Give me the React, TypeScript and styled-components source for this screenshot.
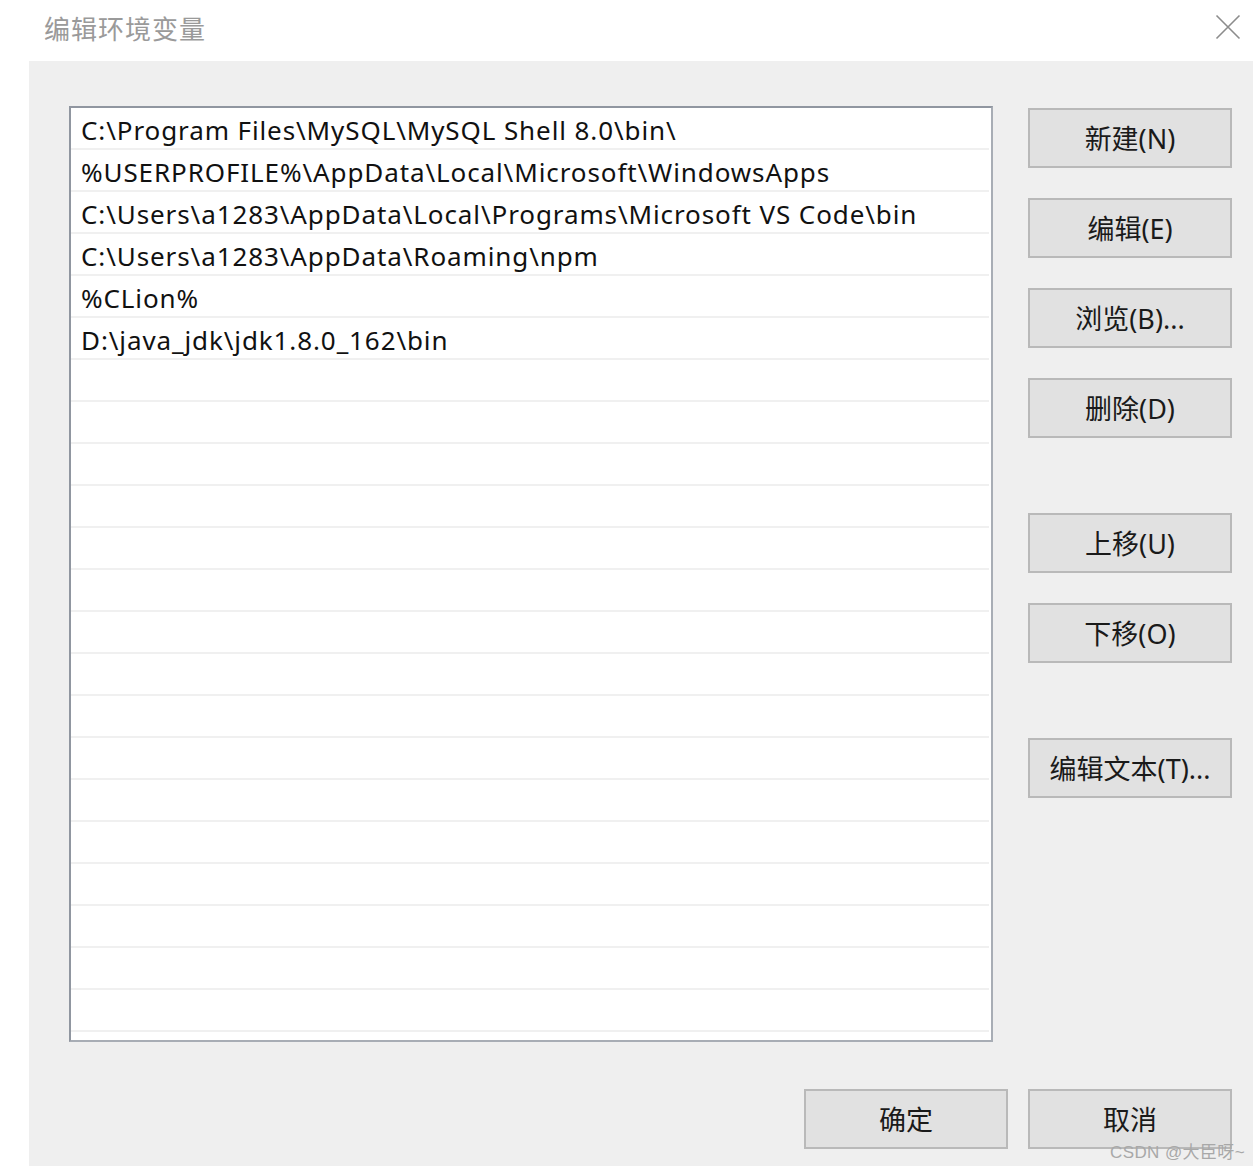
import React from "react";
import styled, { createGlobalStyle } from "styled-components";

const Global = createGlobalStyle`
  html, body { margin: 0; padding: 0; background: #ffffff; }
  body { font-family: "Noto Sans", "Noto Sans CJK SC", sans-serif; }
  * { box-sizing: border-box; }
`;

const Window = styled.div`
  width: 1259px;
  height: 1170px;
  position: relative;
  background: #ffffff;
`;

const TitleBar = styled.div`
  height: 61px;
  display: flex;
  align-items: center;
  justify-content: space-between;
  padding: 0 18px 7px 44px;
`;

const Title = styled.div`
  font-family: "Noto Sans CJK SC", sans-serif;
  font-size: 26px;
  color: #9a9a9a;
  letter-spacing: 1px;
`;

const CloseIcon = styled.svg`
  width: 26px;
  height: 26px;
  display: block;
`;

const Panel = styled.div`
  margin-left: 29px;
  width: 1224px;
  height: 1105px;
  background: #efefef;
  padding: 45px 21px 17px 40px;
  display: flex;
  flex-direction: column;
`;

const Main = styled.div`
  display: flex;
  gap: 35px;
`;

const List = styled.div`
  width: 924px;
  height: 936px;
  background: #ffffff;
  border: 2px solid #9096a0;
  border-right-color: #a8adb5;
  border-bottom-color: #a8adb5;
  display: flex;
  flex-direction: column;
`;

const Row = styled.div`
  height: 42px;
  flex: none;
  border-bottom: 2px solid #f0f0f0;
  margin-right: 2px;
  padding: 3px 0 0 10px;
  display: flex;
  align-items: center;
  font-family: "Noto Sans", "Noto Sans CJK SC", sans-serif;
  font-size: 26px;
  letter-spacing: 0.9px;
  color: #111111;
  white-space: nowrap;
  overflow: hidden;
`;

const ButtonColumn = styled.div`
  padding-top: 2px;
  display: flex;
  flex-direction: column;
  gap: 75px;
`;

const ButtonGroup = styled.div`
  display: flex;
  flex-direction: column;
  gap: 30px;
`;

const Button = styled.button`
  width: 204px;
  height: 60px;
  background: #e1e1e1;
  border: 2px solid #b9b9b9;
  border-radius: 0;
  padding: 0 0 2px 0;
  font-family: "Noto Sans", "Noto Sans CJK SC", sans-serif;
  font-size: 27px;
  color: #1a1a1a;
  display: flex;
  align-items: center;
  justify-content: center;
`;

const Footer = styled.div`
  margin-top: auto;
  display: flex;
  justify-content: flex-end;
  gap: 20px;
`;

const Watermark = styled.div`
  position: absolute;
  left: 1110px;
  top: 1138px;
  font-family: "Liberation Sans", "Noto Sans CJK SC", sans-serif;
  font-size: 17px;
  letter-spacing: 0.4px;
  color: #a8a8a8;
  white-space: nowrap;
`;

const paths = [
  "C:\\Program Files\\MySQL\\MySQL Shell 8.0\\bin\\",
  "%USERPROFILE%\\AppData\\Local\\Microsoft\\WindowsApps",
  "C:\\Users\\a1283\\AppData\\Local\\Programs\\Microsoft VS Code\\bin",
  "C:\\Users\\a1283\\AppData\\Roaming\\npm",
  "%CLion%",
  "D:\\java_jdk\\jdk1.8.0_162\\bin",
];

const rows = Array.from({ length: 22 }, (_, i) => paths[i] ?? "");

const groups = [
  ["新建(N)", "编辑(E)", "浏览(B)...", "删除(D)"],
  ["上移(U)", "下移(O)"],
  ["编辑文本(T)..."],
];

export default function App() {
  return (
    <Window>
      <Global />
      <TitleBar>
        <Title>编辑环境变量</Title>
        <CloseIcon viewBox="0 0 26 26">
          <path d="M1.5 1.5 L24.5 24.5 M24.5 1.5 L1.5 24.5" stroke="#8c8c8c" strokeWidth="1.6" fill="none" />
        </CloseIcon>
      </TitleBar>
      <Panel>
        <Main>
          <List>
            {rows.map((r, i) => (
              <Row key={i}>{r}</Row>
            ))}
          </List>
          <ButtonColumn>
            {groups.map((g, i) => (
              <ButtonGroup key={i}>
                {g.map((b) => (
                  <Button key={b}>{b}</Button>
                ))}
              </ButtonGroup>
            ))}
          </ButtonColumn>
        </Main>
        <Footer>
          <Button>确定</Button>
          <Button>取消</Button>
        </Footer>
      </Panel>
      <Watermark>CSDN @大臣呀~</Watermark>
    </Window>
  );
}
